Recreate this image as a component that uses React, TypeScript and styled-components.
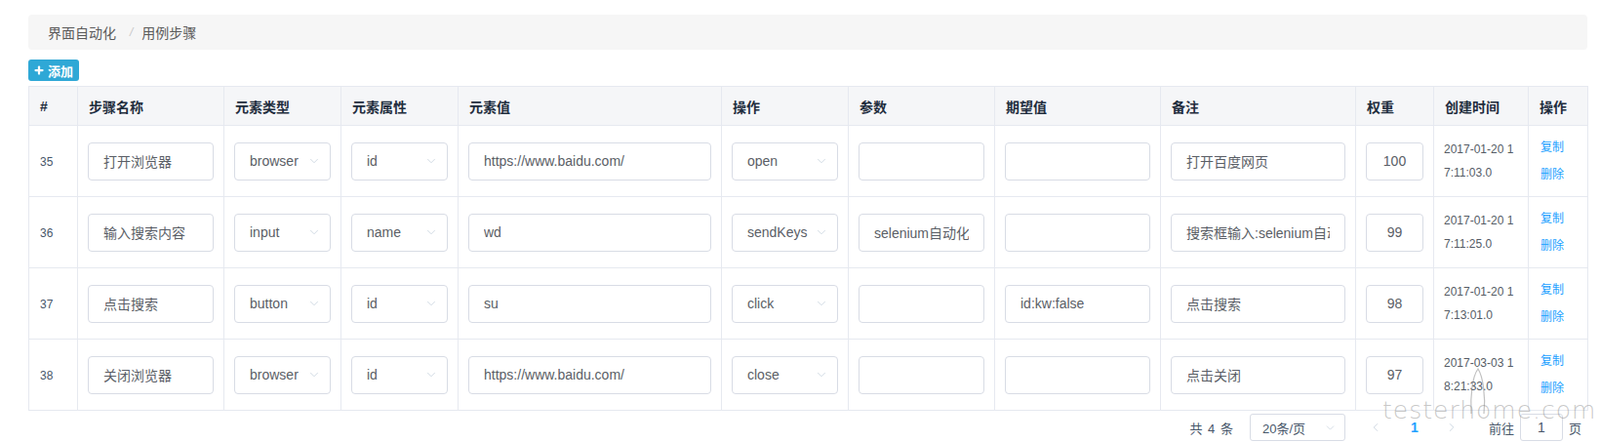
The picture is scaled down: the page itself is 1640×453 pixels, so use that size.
import React from "react";
import styled, { createGlobalStyle } from "styled-components";
import { Plus, ChevronDown, ChevronLeft, ChevronRight } from "lucide-react";

type Step = {
  id: number;
  name: string;
  type: string;
  attr: string;
  value: string;
  action: string;
  param: string;
  expect: string;
  remark: string;
  weight: number;
  created: string;
};

const steps: Step[] = [
  { id: 35, name: "打开浏览器", type: "browser", attr: "id", value: "https://www.baidu.com/", action: "open", param: "", expect: "", remark: "打开百度网页", weight: 100, created: "2017-01-20 17:11:03.0" },
  { id: 36, name: "输入搜索内容", type: "input", attr: "name", value: "wd", action: "sendKeys", param: "selenium自动化", expect: "", remark: "搜索框输入:selenium自动化", weight: 99, created: "2017-01-20 17:11:25.0" },
  { id: 37, name: "点击搜索", type: "button", attr: "id", value: "su", action: "click", param: "", expect: "id:kw:false", remark: "点击搜索", weight: 98, created: "2017-01-20 17:13:01.0" },
  { id: 38, name: "关闭浏览器", type: "browser", attr: "id", value: "https://www.baidu.com/", action: "close", param: "", expect: "", remark: "点击关闭", weight: 97, created: "2017-03-03 18:21:33.0" },
];

const columns = [
  { title: "#", width: 50 },
  { title: "步骤名称", width: 150 },
  { title: "元素类型", width: 120 },
  { title: "元素属性", width: 120 },
  { title: "元素值", width: 270 },
  { title: "操作", width: 130 },
  { title: "参数", width: 150 },
  { title: "期望值", width: 170 },
  { title: "备注", width: 200 },
  { title: "权重", width: 80 },
  { title: "创建时间", width: 97 },
  { title: "操作", width: 61 },
];

const GlobalStyle = createGlobalStyle`
  html, body {
    margin: 0;
    padding: 0;
    background: #fff;
    overflow: hidden;
  }
  body {
    font-family: "Liberation Sans", "Noto Sans CJK SC", sans-serif;
    font-size: 14px;
    color: #48576a;
  }
`;

const SelectField = ({ value }: { value: string }) => (
  <SelectBox>
    <span>{value}</span>
    <ChevronDown size={14} strokeWidth={1.2} color="#bfcbd9" />
  </SelectBox>
);

const App: React.FC = () => {
  return (
    <Page>
      <GlobalStyle />
      <Breadcrumb>
        <Crumb>界面自动化</Crumb>
        <Sep>/</Sep>
        <Crumb>用例步骤</Crumb>
      </Breadcrumb>
      <AddButton>
        <Plus size={12} strokeWidth={4.5} />
        添加
      </AddButton>
      <Table>
        <colgroup>
          {columns.map((c, i) => (
            <col key={i} style={{ width: c.width }} />
          ))}
        </colgroup>
        <thead>
          <tr>
            {columns.map((c, i) => (
              <Th key={i}>{c.title}</Th>
            ))}
          </tr>
        </thead>
        <tbody>
          {steps.map((s) => (
            <tr key={s.id}>
              <Td><IdText>{s.id}</IdText></Td>
              <Td><Field readOnly value={s.name} /></Td>
              <Td><SelectField value={s.type} /></Td>
              <Td><SelectField value={s.attr} /></Td>
              <Td><Field readOnly value={s.value} /></Td>
              <Td><SelectField value={s.action} /></Td>
              <Td><Field readOnly value={s.param} /></Td>
              <Td><Field readOnly value={s.expect} /></Td>
              <Td><Field readOnly value={s.remark} /></Td>
              <Td><Field readOnly center value={String(s.weight)} /></Td>
              <Td><DateText>{s.created}</DateText></Td>
              <Td>
                <LinkButton>复制</LinkButton>
                <LinkButton>删除</LinkButton>
              </Td>
            </tr>
          ))}
        </tbody>
      </Table>
      <Pagination>
        <Total>共 4 条</Total>
        <SizeSelect>
          <span>20条/页</span>
          <ChevronDown size={13} strokeWidth={1.2} color="#bfcbd9" />
        </SizeSelect>
        <PageBtn>
          <ChevronLeft size={14} strokeWidth={1.3} color="#bfcbd9" />
        </PageBtn>
        <PageNumber>1</PageNumber>
        <PageBtn>
          <ChevronRight size={14} strokeWidth={1.3} color="#bfcbd9" />
        </PageBtn>
        <Jumper>
          前往
          <JumpInput readOnly value="1" />
          页
        </Jumper>
      </Pagination>
      <Watermark>
        <svg width="20" height="50" viewBox="0 0 20 50">
          <path d="M3 48 C2 30 4 10 10 2 C15 10 18 30 16 48" fill="none" stroke="rgba(140,140,140,0.55)" strokeWidth="1.2" />
        </svg>
        <WatermarkText>testerhome.com</WatermarkText>
      </Watermark>
    </Page>
  );
};

export default App;

const Page = styled.div`
  position: relative;
  width: 1640px;
  height: 453px;
  box-sizing: border-box;
  padding: 15px 13px 0 29px;
`;

const Breadcrumb = styled.div`
  display: flex;
  align-items: center;
  height: 36px;
  width: 1598px;
  box-sizing: border-box;
  padding: 0 20px;
  background: #f6f6f6;
  border-radius: 4px;
  font-size: 14px;
`;

const Crumb = styled.span`
  color: #5a5a5a;
`;

const Sep = styled.span`
  color: #c8c8c8;
  padding: 0 9px 0 14px;
  font-style: italic;
  font-size: 12px;
`;

const AddButton = styled.button`
  display: flex;
  align-items: center;
  gap: 3px;
  margin-top: 10px;
  height: 22px;
  width: 52px;
  padding: 0 5px;
  border: none;
  border-radius: 3px;
  background: #2fa8d6;
  color: #fff;
  font-family: "Liberation Sans", "Noto Sans CJK SC", sans-serif;
  font-size: 13px;
  font-weight: bold;
`;

const Table = styled.table`
  margin-top: 5px;
  width: 1598px;
  table-layout: fixed;
  border-collapse: collapse;
`;

const Th = styled.th`
  height: 40px;
  padding: 0 11px;
  text-align: left;
  background: #f5f6f8;
  border: 1px solid #e6e9f0;
  color: #1f2d3d;
  font-size: 14px;
  font-weight: bold;
  box-sizing: border-box;
`;

const Td = styled.td`
  height: 73px;
  padding: 0 10px;
  border: 1px solid #e6e9f0;
  vertical-align: middle;
  box-sizing: border-box;
`;

const IdText = styled.span`
  font-size: 12px;
  color: #48576a;
  padding-left: 1px;
`;

const Field = styled.input<{ center?: boolean }>`
  display: block;
  width: 100%;
  height: 39px;
  box-sizing: border-box;
  padding: 0 15px;
  border: 1px solid #d8dce5;
  border-radius: 4px;
  background: #fff;
  outline: none;
  font-family: "Liberation Sans", "Noto Sans CJK SC", sans-serif;
  font-size: 14px;
  color: #5a5e66;
  text-align: ${(p) => (p.center ? "center" : "left")};
`;

const SelectBox = styled.div`
  display: flex;
  align-items: center;
  justify-content: space-between;
  height: 39px;
  box-sizing: border-box;
  padding: 0 9px 0 15px;
  border: 1px solid #d8dce5;
  border-radius: 4px;
  font-size: 14px;
  color: #5a5e66;
`;

const DateText = styled.div`
  font-size: 12px;
  line-height: 24px;
  color: #555c66;
  word-break: break-all;
`;

const LinkButton = styled.div`
  font-size: 12px;
  line-height: 28px;
  color: #20a0ff;
  padding-left: 2px;
`;

const Pagination = styled.div`
  display: flex;
  align-items: center;
  justify-content: flex-end;
  width: 1592px;
  height: 28px;
  margin-top: 3px;
  font-size: 13px;
  color: #48576a;
`;

const Total = styled.span`
  margin-right: 17px;
  word-spacing: 2px;
`;

const SizeSelect = styled.div`
  display: flex;
  align-items: center;
  justify-content: space-between;
  width: 98px;
  height: 28px;
  box-sizing: border-box;
  padding: 0 8px 0 12px;
  border: 1px solid #d8dce5;
  border-radius: 3px;
  margin-right: 17px;
`;

const PageBtn = styled.span`
  display: flex;
  align-items: center;
  justify-content: center;
  width: 28px;
  height: 28px;
`;

const PageNumber = styled.span`
  width: 28px;
  margin: 0 10px 0 12px;
  text-align: center;
  color: #20a0ff;
  font-weight: bold;
  font-size: 14px;
`;

const Jumper = styled.span`
  display: flex;
  align-items: center;
  gap: 6px;
  margin-left: 24px;
`;

const JumpInput = styled.input`
  width: 44px;
  height: 28px;
  box-sizing: border-box;
  border: 1px solid #d8dce5;
  border-radius: 3px;
  text-align: center;
  font-family: "Liberation Sans", sans-serif;
  font-size: 14px;
  color: #48576a;
  outline: none;
`;

const Watermark = styled.div`
  position: absolute;
  left: 1417px;
  top: 376px;
  display: flex;
  flex-direction: column;
  align-items: flex-start;
  pointer-events: none;
  svg {
    margin-left: 88px;
    margin-bottom: -18px;
  }
`;

const WatermarkText = styled.span`
  font-family: "DejaVu Sans", sans-serif;
  font-weight: 200;
  font-size: 25px;
  line-height: 25px;
  letter-spacing: 1px;
  color: rgba(130, 130, 130, 0.45);
  white-space: nowrap;
`;
